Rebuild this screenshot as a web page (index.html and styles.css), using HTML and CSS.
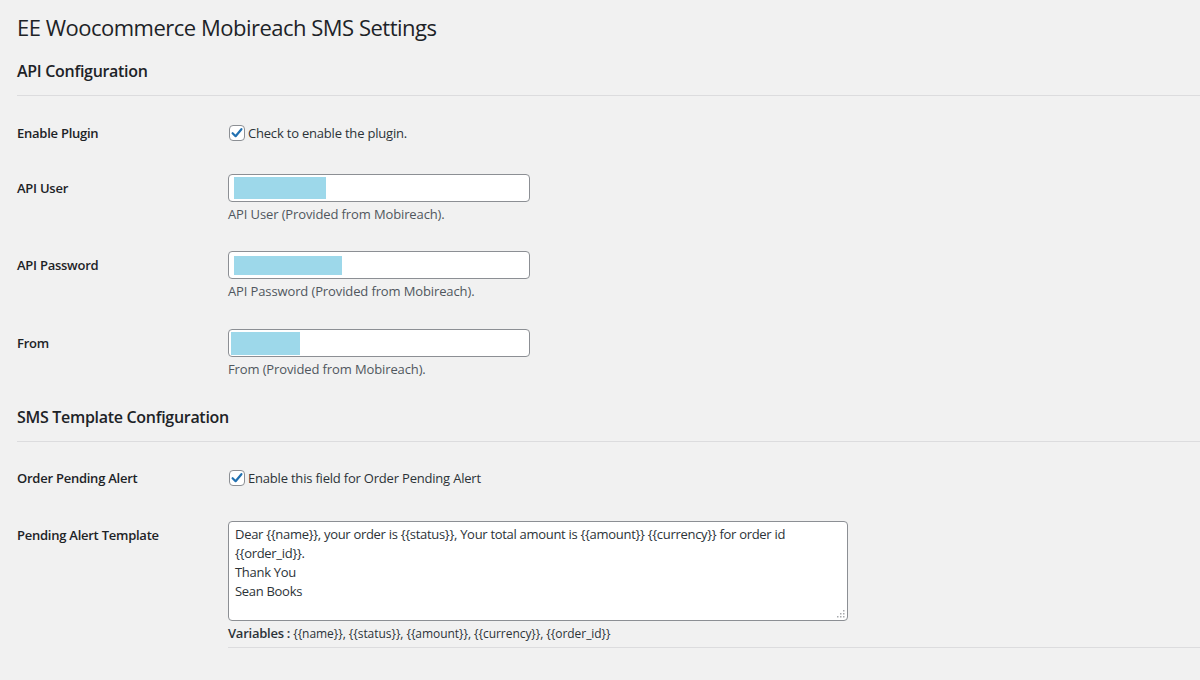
FILE: index.html
```html
<!DOCTYPE html>
<html lang="en">
<head>
<meta charset="utf-8">
<title>EE Woocommerce Mobireach SMS Settings</title>
<link rel="stylesheet" href="styles.css">
</head>
<body>
<div class="wrap">
  <h1 class="page-title">EE Woocommerce Mobireach SMS Settings</h1>

  <h2 class="section-title">API Configuration</h2>
  <div class="rows">
    <div class="row row-check">
      <div class="label">Enable Plugin</div>
      <div class="field">
        <label class="check">
          <span class="box"><svg viewBox="0 0 16 16" width="16" height="16"><path d="M3.6 8.2 L6.6 11.2 L12.4 4.2" fill="none" stroke="#2271b1" stroke-width="2.2" stroke-linecap="round" stroke-linejoin="round"/></svg></span>
          <span>Check to enable the plugin.</span>
        </label>
      </div>
    </div>

    <div class="row row-input r-user">
      <div class="label">API User</div>
      <div class="field">
        <div class="input"><span class="mask mask-user"></span></div>
        <p class="desc">API User (Provided from Mobireach).</p>
      </div>
    </div>

    <div class="row row-input r-pass">
      <div class="label">API Password</div>
      <div class="field">
        <div class="input"><span class="mask mask-pass"></span></div>
        <p class="desc">API Password (Provided from Mobireach).</p>
      </div>
    </div>

    <div class="row row-input r-from">
      <div class="label">From</div>
      <div class="field">
        <div class="input"><span class="mask mask-from"></span></div>
        <p class="desc">From (Provided from Mobireach).</p>
      </div>
    </div>
  </div>

  <h2 class="section-title second">SMS Template Configuration</h2>
  <div class="rows">
    <div class="row row-check r-pending">
      <div class="label">Order Pending Alert</div>
      <div class="field">
        <label class="check">
          <span class="box"><svg viewBox="0 0 16 16" width="16" height="16"><path d="M3.6 8.2 L6.6 11.2 L12.4 4.2" fill="none" stroke="#2271b1" stroke-width="2.2" stroke-linecap="round" stroke-linejoin="round"/></svg></span>
          <span>Enable this field for Order Pending Alert</span>
        </label>
      </div>
    </div>

    <div class="row r-template">
      <div class="label label-top">Pending Alert Template</div>
      <div class="field field-wide">
        <div class="textarea-wrap">
          <div class="textarea">Dear {{name}}, your order is {{status}}, Your total amount is {{amount}} {{currency}} for order id {{order_id}}.<br>Thank You<br>Sean Books</div>
          <svg class="grip" viewBox="0 0 8 8" width="8" height="8"><rect x="6" y="0" width="1.5" height="1.5" fill="#a7aaad"/><rect x="6" y="3" width="1.5" height="1.5" fill="#a7aaad"/><rect x="3" y="3" width="1.5" height="1.5" fill="#a7aaad"/><rect x="6" y="6" width="1.5" height="1.5" fill="#a7aaad"/><rect x="3" y="6" width="1.5" height="1.5" fill="#a7aaad"/><rect x="0" y="6" width="1.5" height="1.5" fill="#a7aaad"/></svg>
        </div>
        <p class="vars"><strong>Variables :</strong> {{name}}, {{status}}, {{amount}}, {{currency}}, {{order_id}}</p>
      </div>
    </div>
  </div>
</div>
</body>
</html>
```

FILE: styles.css
```css
* { box-sizing: border-box; }

html, body {
  margin: 0;
  background: #f1f1f1;
}

body {
  font-family: "Open Sans", "Noto Sans", "Liberation Sans", sans-serif;
  font-size: 13px;
  color: #1d2327;
  width: 1200px;
  height: 680px;
  overflow: hidden;
}

.wrap {
  padding-left: 17px;
}

.page-title {
  margin: 0;
  padding-top: 12px;
  font-size: 22px;
  font-weight: 400;
  line-height: 30px;
  letter-spacing: -0.5px;
  color: #1d2327;
}

.section-title {
  margin: 17px 0 0 0;
  padding-bottom: 12px;
  font-size: 16px;
  font-weight: 600;
  line-height: 24px;
  letter-spacing: -0.3px;
  border-bottom: 1px solid #dcdcde;
  color: #1d2327;
}

.section-title.second {
  margin-top: 26px;
}

.row {
  display: flex;
  align-items: flex-start;
}

.label {
  width: 211px;
  flex: none;
  font-weight: 600;
  font-size: 13px;
  letter-spacing: -0.25px;
  color: #1d2327;
}

.field {
  flex: 1;
}

.row-check {
  padding-top: 27px;
  line-height: 20px;
}

.row-check .label { line-height: 20px; }

.r-pending { padding-top: 26px; }

.check {
  display: flex;
  align-items: center;
  gap: 3px;
  color: #2c3338;
  padding-left: 1px;
  letter-spacing: -0.2px;
}

.box {
  width: 16px;
  height: 16px;
  border: 1px solid #8c8f94;
  border-radius: 4px;
  background: #fff;
  display: flex;
  align-items: center;
  justify-content: center;
}

.box svg { display: block; margin: -1px; }

.row-input .label { line-height: 28px; }

.r-user { padding-top: 31px; }
.r-pass { padding-top: 27px; }
.r-from { padding-top: 28px; }

.input {
  width: 302px;
  height: 28px;
  border: 1px solid #8c8f94;
  border-radius: 4px;
  background: #fff;
  padding: 2px 4px;
  display: flex;
  align-items: stretch;
}

.mask {
  display: block;
  background: #9dd8ea;
}

.mask-user { width: 92px; margin-left: 1px; }
.mask-pass { width: 108px; margin: 2px 0 1px 1px; }
.mask-from { width: 69px; margin-left: -2px; margin-bottom: -1px; }

.desc {
  margin: 3px 0 0 0;
  line-height: 19px;
  color: #50575e;
  font-size: 13px;
  letter-spacing: -0.12px;
}

.r-template { padding-top: 33px; }

.label-top {
  padding-top: 5px;
  line-height: 19px;
}

.textarea-wrap {
  position: relative;
  width: 620px;
}

.textarea {
  height: 100px;
  border: 1px solid #8c8f94;
  border-radius: 4px;
  background: #fff;
  padding: 3px 6px;
  line-height: 19px;
  color: #2c3338;
  font-size: 13px;
  letter-spacing: -0.3px;
}

.grip {
  position: absolute;
  right: 3px;
  bottom: 3px;
}

.vars {
  margin: 3px 0 0 0;
  padding-bottom: 4px;
  line-height: 19px;
  color: #2c3338;
  font-size: 12px;
  letter-spacing: -0.05px;
  border-bottom: 1px solid #dcdcde;
}

.vars strong { font-weight: 600; font-size: 13px; letter-spacing: -0.25px; }
```
